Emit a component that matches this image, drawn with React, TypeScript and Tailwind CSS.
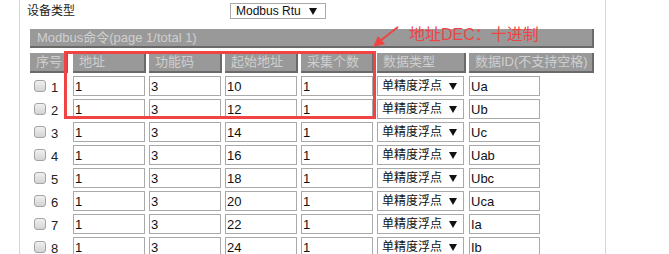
const font = "font-['Liberation_Sans','Noto_Sans_CJK_SC',sans-serif]";

const rows = [
  { n: 1, addr: '1', fn: '3', start: '10', count: '1', id: 'Ua' },
  { n: 2, addr: '1', fn: '3', start: '12', count: '1', id: 'Ub' },
  { n: 3, addr: '1', fn: '3', start: '14', count: '1', id: 'Uc' },
  { n: 4, addr: '1', fn: '3', start: '16', count: '1', id: 'Uab' },
  { n: 5, addr: '1', fn: '3', start: '18', count: '1', id: 'Ubc' },
  { n: 6, addr: '1', fn: '3', start: '20', count: '1', id: 'Uca' },
  { n: 7, addr: '1', fn: '3', start: '22', count: '1', id: 'Ia' },
  { n: 8, addr: '1', fn: '3', start: '24', count: '1', id: 'Ib' },
];

function HeadCell({ label, className = '' }: { label: string; className?: string }) {
  return (
    <div
      className={`h-[20px] bg-[#999999] border-r-2 border-b-2 border-[#6a6a6a] pl-[6px] text-[13px] leading-[18px] text-[#cfcfcf] whitespace-nowrap overflow-hidden ${className}`}
    >
      {label}
    </div>
  );
}

function TextBox({ value, className = 'w-[72px]' }: { value: string; className?: string }) {
  return (
    <div
      className={`h-[20px] border border-[#a9a9a9] bg-white pl-[1px] text-[13px] leading-[19px] text-[#111] ${className}`}
    >
      {value}
    </div>
  );
}

function DownArrow() {
  return (
    <svg width="8" height="7" viewBox="0 0 8 7" className="shrink-0">
      <polygon points="0,0 8,0 4,7" fill="#111" />
    </svg>
  );
}

function TypeSelect() {
  return (
    <div className="h-[20px] w-[87px] border border-[#a9a9a9] bg-white flex items-center justify-between pl-[4px] pr-[6px] text-[12px] text-[#111] whitespace-nowrap">
      <span>单精度浮点</span>
      <DownArrow />
    </div>
  );
}

export default function App() {
  return (
    <div className={`relative w-[669px] h-[254px] overflow-hidden bg-white ${font}`}>
      <div className="ml-[19px] w-[587px] h-[254px] border-l border-r border-[#d6d6d6]">
        {/* device type */}
        <div className="flex items-center h-[22px]">
          <span className="ml-[7px] w-[203px] text-[12px] text-[#222]">设备类型</span>
          <div className="h-[16px] w-[96px] border border-[#a9a9a9] flex items-center justify-between pl-[5px] pr-[8px] text-[12px] text-[#111] whitespace-nowrap">
            <span>Modbus Rtu</span>
            <DownArrow />
          </div>
        </div>

        {/* title bar */}
        <div className="ml-[10px] mt-[7px] w-[564px] h-[19px] bg-[#999999] border-r-2 border-b-2 border-[#6a6a6a] pl-[7px] text-[13px] leading-[17px] text-[#cfcfcf] whitespace-nowrap">
          Modbus命令(page 1/total 1)
        </div>

        {/* table */}
        <div className="ml-[10px] mt-[5px] grid grid-cols-[40px_73px_73px_73px_73px_89px_125px] gap-x-[3px] gap-y-[3px]">
          <HeadCell label="序号" className="w-[38px]" />
          <HeadCell label="地址" />
          <HeadCell label="功能码" />
          <HeadCell label="起始地址" />
          <HeadCell label="采集个数" />
          <HeadCell label="数据类型" />
          <HeadCell label="数据ID(不支持空格)" className="pl-[4px]" />

          {rows.map((r) => (
            <div key={r.n} className="contents">
              <div className="h-[20px] flex items-center pl-[4px] gap-[5px]">
                <span className="w-[12px] h-[12px] rounded-[3px] border border-[#a4a4a4] bg-gradient-to-b from-[#f0f0f0] to-[#d4d4d4]" />
                <span className="text-[13px] leading-[14px] text-[#222] mt-[3px]">{r.n}</span>
              </div>
              <TextBox value={r.addr} />
              <TextBox value={r.fn} />
              <TextBox value={r.start} />
              <TextBox value={r.count} />
              <TypeSelect />
              <TextBox value={r.id} className="w-[71px]" />
            </div>
          ))}
        </div>
      </div>

      {/* annotation box */}
      <div className="absolute left-[64px] top-[51px] w-[312px] h-[68px] border-[3px] border-[#f04444]" />
      <svg className="absolute left-[368px] top-[22px]" width="36" height="30" viewBox="0 0 36 30">
        <line x1="30" y1="5" x2="12" y2="19" stroke="#f04444" strokeWidth="2" />
        <polygon points="5,25 10,14 17,22" fill="#f04444" />
      </svg>
      <div className="absolute left-[409px] top-[23px] text-[16px] text-[#f04444] whitespace-nowrap">
        地址DEC：十进制
      </div>
    </div>
  );
}
